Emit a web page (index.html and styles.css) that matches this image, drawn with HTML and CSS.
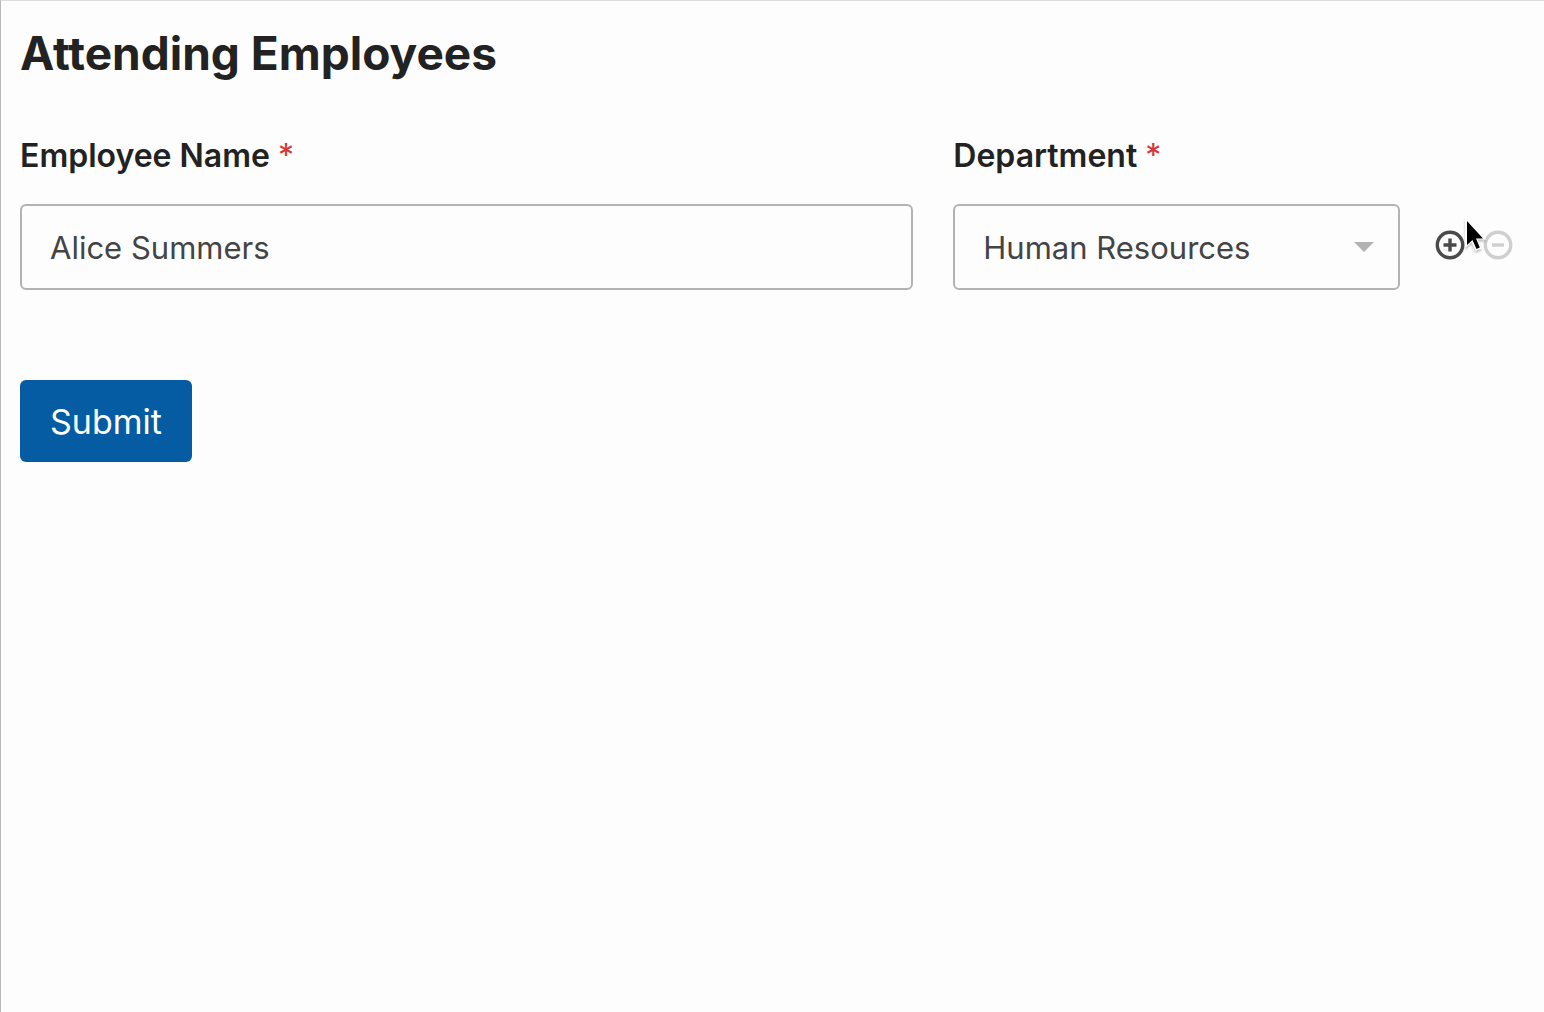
FILE: index.html
```html
<!DOCTYPE html>
<html lang="en">

<head>
    <meta charset="UTF-8">
    <meta name="viewport" content="width=device-width, initial-scale=1.0">
    <title>Attending Employees</title>
    <link rel="stylesheet" href="styles.css">
</head>

<body>
    <form class="form">
        <h1 class="heading">Attending Employees</h1>

        <div class="row">
            <div class="field">
                <label for="name">Employee Name <span class="required">*</span></label>
                <input type="text" id="name" class="control" value="Alice Summers" required>
            </div>

            <div class="field">
                <label for="department">Department <span class="required">*</span></label>
                <div class="select_box">
                    <select id="department" class="control" required>
                        <option selected>Human Resources</option>
                    </select>
                    <svg class="arrow" width="20" height="10" viewBox="0 0 20 10" aria-hidden="true">
                        <path d="M0 0H20L10 10Z" fill="#b3b3b3" />
                    </svg>
                </div>
            </div>

            <!-- add / remove a row -->
            <div class="actions">
                <button type="button" class="icon_btn" aria-label="Add">
                    <svg width="30" height="30" viewBox="0 0 30 30" fill="none" stroke="currentColor" stroke-width="3.4">
                        <circle cx="15" cy="15" r="12.7" />
                        <path d="M8.5 15H21.5M15 8.5V21.5" />
                    </svg>
                </button>
                <button type="button" class="icon_btn remove" aria-label="Remove">
                    <svg width="30" height="30" viewBox="0 0 30 30" fill="none" stroke="currentColor" stroke-width="3.4">
                        <circle cx="15" cy="15" r="12.7" />
                        <path d="M9 15H21" />
                    </svg>
                </button>
                <svg class="cursor" width="26" height="38" viewBox="0 0 26 38" aria-hidden="true">
                    <path d="M3 1V32L9.5 26L13.5 35L19.5 32.5L15.5 23.5H24.5Z" fill="#fff" />
                    <path d="M5 5V29L10.5 24L14.5 33L17.8 31.5L14 22.5H21Z" fill="#000" />
                </svg>
            </div>
        </div>

        <button type="submit" class="submit_btn">Submit</button>
    </form>
</body>

</html>
```

FILE: styles.css
```css
* {
    box-sizing: border-box;
}

body {
    margin: 0;
    min-height: 100vh;
    background-color: #fdfdfd;
    border-top: 1px solid #dcdcdc;
    border-left: 1px solid #b9b9b9;
    font-family: Inter, "Liberation Sans", sans-serif;
    color: #222;
}

.form {
    padding: 23px 31px 24px 19px;
}

.heading {
    margin: 0 0 54px;
    font-size: 46px;
    line-height: 58px;
    font-weight: bold;
}

.row {
    display: grid;
    grid-template-columns: 2fr 1fr auto;
    column-gap: 40px;
    align-items: end;
}

.field {
    display: flex;
    flex-direction: column;
    gap: 28px;
    min-width: 0;
}

label {
    font-size: 32px;
    line-height: 40px;
    font-weight: 600;
}

.required {
    color: #d63637;
    font-weight: normal;
}

.control {
    display: block;
    width: 100%;
    height: 86px;
    padding: 0 28px;
    border: 2px solid #b3b3b3;
    border-radius: 6px;
    background-color: #fdfdfd;
    font-family: inherit;
    font-size: 31px;
    color: #444;
    appearance: none;
}

.select_box {
    position: relative;
}

.arrow {
    position: absolute;
    top: 38px;
    right: 26px;
    pointer-events: none;
}

.actions {
    position: relative;
    display: flex;
    align-items: center;
    gap: 18px;
    height: 86px;
    padding-bottom: 4px;
    margin-left: -5px;
}

.icon_btn {
    display: flex;
    padding: 0;
    border: none;
    background: none;
    color: #4a4a4a;
}

.remove {
    color: #cfcfcf;
}

.cursor {
    position: absolute;
    top: 12px;
    left: 27px;
    pointer-events: none;
    filter: drop-shadow(0 2px 1px rgba(0, 0, 0, 0.25));
}

.submit_btn {
    display: block;
    height: 82px;
    margin-top: 90px;
    padding: 0 30px;
    border: none;
    border-radius: 6px;
    background-color: #055ca2;
    font-family: inherit;
    font-size: 34px;
    color: #fff;
}
```
